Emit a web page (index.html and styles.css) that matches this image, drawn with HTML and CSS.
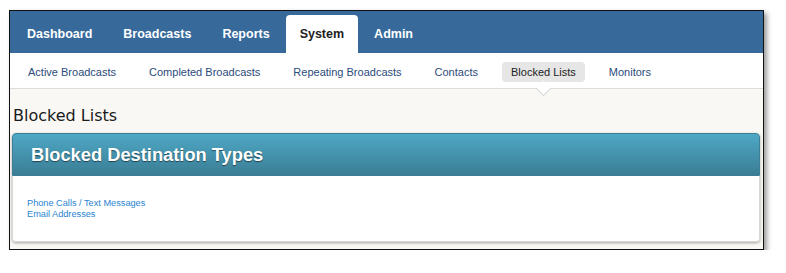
FILE: index.html
```html
<!DOCTYPE html>
<html lang="en">
  <head>
    <meta charset="UTF-8" />
    <title>Blocked Lists</title>
    <link rel="stylesheet" href="styles.css">
  </head>
  <body>
    <div class="frame">
      <nav class="topnav">
        <a class="tab" href="#">Dashboard</a>
        <a class="tab" href="#">Broadcasts</a>
        <a class="tab" href="#">Reports</a>
        <a class="tab active" href="#">System</a>
        <a class="tab" href="#">Admin</a>
      </nav>

      <nav class="subnav">
        <a href="#">Active Broadcasts</a>
        <a href="#">Completed Broadcasts</a>
        <a href="#">Repeating Broadcasts</a>
        <a href="#">Contacts</a>
        <a class="current" href="#">Blocked Lists<span class="notch"></span></a>
        <a href="#">Monitors</a>
      </nav>

      <main class="content">
        <h1>Blocked Lists</h1>
        <section class="panel">
          <header class="panel-head">
            <h2>Blocked Destination Types</h2>
          </header>
          <div class="panel-body">
            <a href="#">Phone Calls / Text Messages</a>
            <a href="#">Email Addresses</a>
          </div>
        </section>
      </main>
    </div>
  </body>
</html>
```

FILE: styles.css
```css
* {
  margin: 0;
  padding: 0;
  box-sizing: border-box;
}
body {
  font-family: "Liberation Sans", Arial, sans-serif;
  background-color: #fff;
}
a {
  text-decoration: none;
}
.frame {
  margin: 10px 0 0 9px;
  width: 755px;
  height: 240px;
  border: 1px solid #111;
  box-shadow: 3px 3px 5px rgba(0, 0, 0, 0.4);
  display: flex;
  flex-direction: column;
  overflow: hidden;
}
.topnav {
  display: flex;
  gap: 1px;
  height: 42px;
  padding: 4px 0 0 2px;
  background-color: #38699b;
}
.tab {
  padding: 1px 15px 0;
  line-height: 37px;
  font-size: 12.5px;
  font-weight: bold;
  color: #fff;
  border-radius: 4px 4px 0 0;
}
.tab.active {
  padding: 1px 14px 0;
  background-color: #fff;
  color: #222;
}
.subnav {
  display: flex;
  gap: 15px;
  height: 36px;
  padding: 9px 0 0 9px;
  background-color: #fff;
  border-bottom: 1px solid #dcdcdc;
}
.subnav a {
  position: relative;
  height: 20px;
  padding: 0 9px;
  line-height: 20px;
  font-size: 11px;
  color: #2b4b7c;
  border-radius: 4px;
}
.subnav a.current {
  background-color: #e6e6e6;
  color: #222;
}
.notch {
  position: absolute;
  left: 50%;
  top: 21px;
  width: 11px;
  height: 11px;
  margin-left: -5.5px;
  background-color: #fff;
  border-right: 1px solid #d6d6d6;
  border-bottom: 1px solid #d6d6d6;
  transform: rotate(45deg);
}
.content {
  flex: 1;
  padding: 0 3px 0 2px;
  background-color: #f9f8f4;
}
.content h1 {
  margin: 17px 0 7px 1px;
  font-family: "DejaVu Sans", Verdana, sans-serif;
  font-size: 16px;
  font-weight: normal;
  line-height: 20px;
  color: #1a1a1a;
}
.panel {
  border-radius: 4px;
  background-color: #fff;
  box-shadow: 0 1px 3px rgba(0, 0, 0, 0.35);
}
.panel-head {
  height: 43px;
  padding-left: 18px;
  border: 1px solid #3c7f96;
  border-radius: 4px 4px 0 0;
  background: linear-gradient(#4ea8c5, #3b7d95);
}
.panel-head h2 {
  font-size: 18.3px;
  line-height: 41px;
  color: #fff;
  text-shadow: 0 1px 1px rgba(0, 0, 0, 0.5);
}
.panel-body {
  display: flex;
  flex-direction: column;
  height: 66px;
  padding: 22px 14px 0;
  border: 1px solid #d8d8d8;
  border-top: none;
  border-radius: 0 0 4px 4px;
}
.panel-body a {
  font-size: 9.2px;
  line-height: 11px;
  color: #2a84d0;
}
```
